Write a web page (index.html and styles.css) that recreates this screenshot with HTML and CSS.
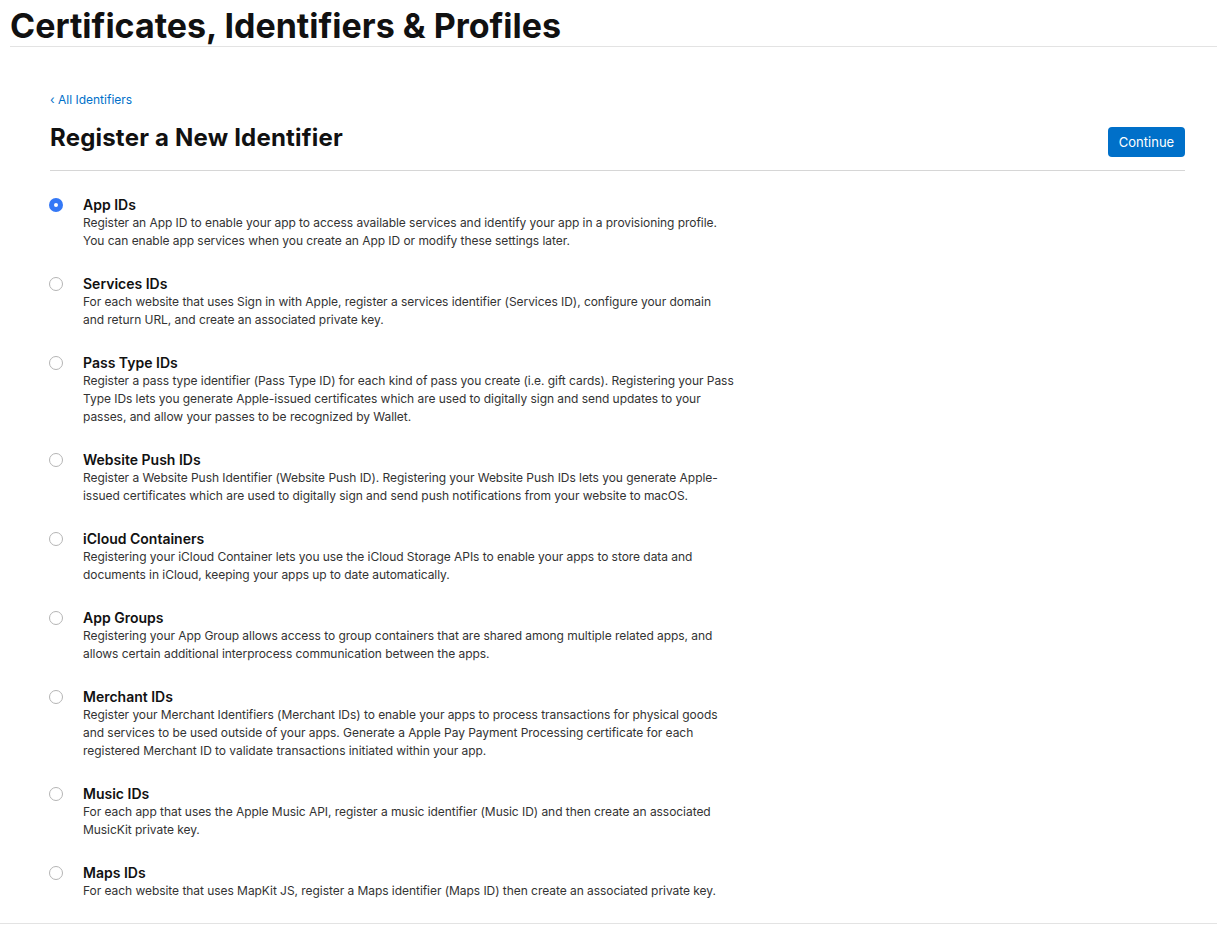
FILE: index.html
```html
<!DOCTYPE html>
<html lang="en">
<head>
<meta charset="utf-8">
<title>Register a New Identifier</title>
<link rel="stylesheet" href="styles.css">
</head>
<body>
<header class="topbar">
  <h1 class="site-title">Certificates, Identifiers &amp; Profiles</h1>
</header>
<main class="content">
  <a class="back-link" href="#">‹ All Identifiers</a>
  <div class="page-head">
    <h2 class="page-title">Register a New Identifier</h2>
    <button class="btn-primary" type="button">Continue</button>
  </div>
  <ul class="options">
    <li class="option">
      <span class="radio checked"></span>
      <div class="option-body">
        <div class="option-title">App IDs</div>
        <p class="option-desc">Register an App ID to enable your app to access available services and identify your app in a provisioning profile.<br>You can enable app services when you create an App ID or modify these settings later.</p>
      </div>
    </li>
    <li class="option">
      <span class="radio"></span>
      <div class="option-body">
        <div class="option-title">Services IDs</div>
        <p class="option-desc">For each website that uses Sign in with Apple, register a services identifier (Services ID), configure your domain<br>and return URL, and create an associated private key.</p>
      </div>
    </li>
    <li class="option">
      <span class="radio"></span>
      <div class="option-body">
        <div class="option-title">Pass Type IDs</div>
        <p class="option-desc">Register a pass type identifier (Pass Type ID) for each kind of pass you create (i.e. gift cards). Registering your Pass<br>Type IDs lets you generate Apple-issued certificates which are used to digitally sign and send updates to your<br>passes, and allow your passes to be recognized by Wallet.</p>
      </div>
    </li>
    <li class="option">
      <span class="radio"></span>
      <div class="option-body">
        <div class="option-title">Website Push IDs</div>
        <p class="option-desc">Register a Website Push Identifier (Website Push ID). Registering your Website Push IDs lets you generate Apple-<br>issued certificates which are used to digitally sign and send push notifications from your website to macOS.</p>
      </div>
    </li>
    <li class="option">
      <span class="radio"></span>
      <div class="option-body">
        <div class="option-title">iCloud Containers</div>
        <p class="option-desc">Registering your iCloud Container lets you use the iCloud Storage APIs to enable your apps to store data and<br>documents in iCloud, keeping your apps up to date automatically.</p>
      </div>
    </li>
    <li class="option">
      <span class="radio"></span>
      <div class="option-body">
        <div class="option-title">App Groups</div>
        <p class="option-desc">Registering your App Group allows access to group containers that are shared among multiple related apps, and<br>allows certain additional interprocess communication between the apps.</p>
      </div>
    </li>
    <li class="option">
      <span class="radio"></span>
      <div class="option-body">
        <div class="option-title">Merchant IDs</div>
        <p class="option-desc">Register your Merchant Identifiers (Merchant IDs) to enable your apps to process transactions for physical goods<br>and services to be used outside of your apps. Generate a Apple Pay Payment Processing certificate for each<br>registered Merchant ID to validate transactions initiated within your app.</p>
      </div>
    </li>
    <li class="option">
      <span class="radio"></span>
      <div class="option-body">
        <div class="option-title">Music IDs</div>
        <p class="option-desc">For each app that uses the Apple Music API, register a music identifier (Music ID) and then create an associated<br>MusicKit private key.</p>
      </div>
    </li>
    <li class="option">
      <span class="radio"></span>
      <div class="option-body">
        <div class="option-title">Maps IDs</div>
        <p class="option-desc">For each website that uses MapKit JS, register a Maps identifier (Maps ID) then create an associated private key.</p>
      </div>
    </li>
  </ul>
</main>
<div class="page-end"></div>
</body>
</html>
```
FILE: styles.css
```css
* { box-sizing: border-box; }
html, body { margin: 0; padding: 0; background: #fff; }
body {
  font-family: Inter, "Liberation Sans", Arial, sans-serif;
  color: #111;
  width: 1217px;
}
.topbar {
  margin-left: 10px;
  height: 47px;
  border-bottom: 1px solid #e3e3e3;
}
.site-title {
  margin: 0;
  padding-top: 6px;
  font-size: 34px;
  line-height: 40px;
  font-weight: 700;
  letter-spacing: 0;
  color: #111;
}
.content {
  padding: 44px 32px 0 50px;
}
.back-link {
  display: block;
  font-size: 12px;
  line-height: 18px;
  color: #0070c9;
  text-decoration: none;
}
.page-head {
  display: flex;
  justify-content: space-between;
  align-items: flex-start;
  margin-top: 10px;
  height: 52px;
  border-bottom: 1px solid #d6d6d6;
}
.page-title {
  margin: 0;
  padding-top: 4px;
  font-size: 24px;
  line-height: 30px;
  font-weight: 700;
  letter-spacing: 0.2px;
  color: #111;
}
.btn-primary {
  margin-top: 8px;
  width: 77px;
  height: 30px;
  border: none;
  border-radius: 4px;
  background: #0070c9;
  color: #fff;
  font-family: inherit;
  font-size: 13px;
  padding: 0;
  cursor: pointer;
}
.options {
  list-style: none;
  margin: 0;
  padding: 25px 0 0 0;
}
.option {
  display: flex;
  align-items: flex-start;
  margin-bottom: 25px;
}
.option:last-child {
  margin-bottom: 23px;
}
.radio {
  flex: none;
  width: 14px;
  height: 14px;
  border-radius: 50%;
  border: 1px solid #b5b5b5;
  margin: 2px 20px 0 -1px;
  position: relative;
}
.radio.checked {
  border: none;
  background: #3478f6;
}
.radio.checked::after {
  content: "";
  position: absolute;
  left: 5px;
  top: 5px;
  width: 4px;
  height: 4px;
  border-radius: 50%;
  background: #fff;
}
.option-title {
  font-size: 14px;
  line-height: 18px;
  font-weight: 600;
  color: #111;
}
.option-desc {
  margin: 0;
  font-size: 12px;
  line-height: 18px;
  letter-spacing: -0.05px;
  color: #333;
  white-space: nowrap;
}
.page-end {
  border-top: 1px solid #e3e3e3;
}
```
